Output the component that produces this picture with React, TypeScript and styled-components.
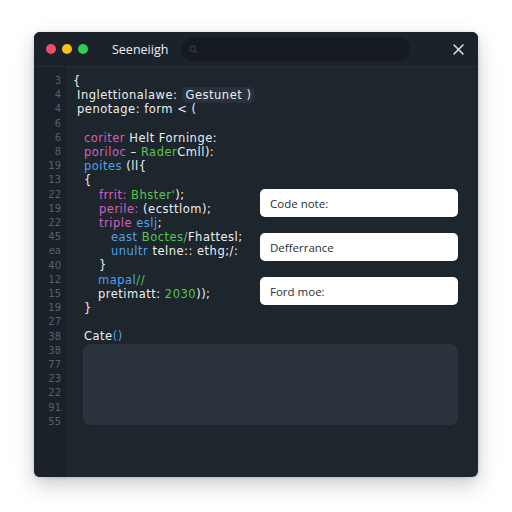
import React from 'react';
import styled, { createGlobalStyle } from 'styled-components';

const GlobalStyle = createGlobalStyle`
  html, body {
    margin: 0;
    padding: 0;
    background: #ffffff;
    font-family: "Open Sans", "Noto Sans", sans-serif;
  }
`;

const Page = styled.div`
  width: 512px;
  height: 512px;
  padding: 32px 34px 35px 34px;
  box-sizing: border-box;
  background: #ffffff;
`;

const Window = styled.div`
  width: 444px;
  height: 445px;
  display: flex;
  flex-direction: column;
  background: #1d252d;
  border-radius: 6px;
  overflow: hidden;
  box-shadow: 0 8px 22px rgba(0, 0, 0, 0.2), 0 1px 4px rgba(0, 0, 0, 0.15);
`;

const TitleBar = styled.header`
  height: 35px;
  flex-shrink: 0;
  display: flex;
  align-items: center;
  padding: 0 14px 0 12px;
  background: #1b2229;
  border-bottom: 1px solid #232b33;
  box-sizing: border-box;
`;

const Lights = styled.div`
  display: flex;
  gap: 6px;
`;

const Light = styled.span<{ $color: string }>`
  width: 10px;
  height: 10px;
  border-radius: 50%;
  background: ${(p) => p.$color};
`;

const Title = styled.span`
  margin-left: 24px;
  color: #eef1f4;
  font-size: 12.5px;
  font-weight: 500;
`;

const Search = styled.div`
  margin-left: 13px;
  width: 229px;
  height: 24px;
  border-radius: 12px;
  background: #151b21;
  display: flex;
  align-items: center;
  padding-left: 8px;
  box-sizing: border-box;
  color: #2c353e;
`;

const Close = styled.div`
  margin-left: auto;
  display: flex;
  color: #dfe3e7;
`;

const Body = styled.div`
  flex: 1;
  display: flex;
`;

const Gutter = styled.div`
  width: 34px;
  flex-shrink: 0;
  padding: 7px 6px 0 0;
  box-sizing: border-box;
  background: #1a2128;
  border-right: 1px solid #222a32;
  text-align: right;
  font-family: "DejaVu Sans", sans-serif;
  font-size: 10px;
  line-height: 14.2px;
  color: #56616c;
`;

const Editor = styled.div`
  flex: 1;
  padding: 7px 20px 0 5px;
  box-sizing: border-box;
`;

const Top = styled.div`
  display: grid;
  grid-template-columns: 1fr 198px;
`;

const Code = styled.div`
  font-family: "DejaVu Sans", sans-serif;
  font-size: 11.5px;
  letter-spacing: 0.5px;
  line-height: 14.2px;
  color: #eceff2;
  white-space: pre;
`;

const Line = styled.div<{ $indent: number }>`
  height: 14.2px;
  padding-left: ${(p) => p.$indent}px;
`;

const Tok = styled.span<{ $kind?: 'kw' | 'fn' | 'str' | 'mark' }>`
  color: ${(p) =>
    p.$kind === 'kw'
      ? '#d660bd'
      : p.$kind === 'fn'
      ? '#4ea3ea'
      : p.$kind === 'str'
      ? '#5cc453'
      : '#eceff2'};
  ${(p) =>
    p.$kind === 'mark' &&
    `background: #29323b; border-radius: 5px; padding: 1px 4px;`}
`;

const Notes = styled.div`
  display: flex;
  flex-direction: column;
  gap: 16px;
  padding-top: 115px;
`;

const Note = styled.div`
  height: 28px;
  display: flex;
  align-items: center;
  padding-left: 10px;
  background: #ffffff;
  border-radius: 5px;
  color: #2a2f35;
  font-size: 11.5px;
`;

const Panel = styled.div`
  margin: 0 0 0 10px;
  height: 81px;
  border-radius: 8px;
  background: #2b343d;
`;

const numbers = ['3', '4', '4', '6', '6', '8', '19', '13', '22', '19', '22', '45', 'ea', '40', '12', '15', '19', '27', '38', '38', '77', '23', '22', '91', '55'];

export default function App() {
  return (
    <>
      <GlobalStyle />
      <Page>
        <Window>
          <TitleBar>
            <Lights>
              <Light $color="#ee4d6a" />
              <Light $color="#f6c21d" />
              <Light $color="#2fcf55" />
            </Lights>
            <Title>Seeneiigh</Title>
            <Search>
              <svg width="9" height="9" viewBox="0 0 10 10" fill="none" stroke="currentColor" strokeWidth="1.6">
                <circle cx="4.2" cy="4.2" r="3" />
                <path d="M6.5 6.5 L9 9" />
              </svg>
            </Search>
            <Close>
              <svg width="11" height="11" viewBox="0 0 11 11" stroke="currentColor" strokeWidth="1.5" strokeLinecap="round">
                <path d="M1 1 L10 10 M10 1 L1 10" />
              </svg>
            </Close>
          </TitleBar>
          <Body>
            <Gutter>
              {numbers.map((n, i) => (
                <div key={i}>{n}</div>
              ))}
            </Gutter>
            <Editor>
              <Top>
                <Code>
                  <Line $indent={0}>{'{'}</Line>
                  <Line $indent={4}>
                    Inglettionalawe: <Tok $kind="mark">Gestunet )</Tok>
                  </Line>
                  <Line $indent={4}>penotage: form &lt; (</Line>
                  <Line $indent={0}> </Line>
                  <Line $indent={11}>
                    <Tok $kind="kw">coriter</Tok> Helt Forninge:
                  </Line>
                  <Line $indent={11}>
                    <Tok $kind="kw">poriloc</Tok> – <Tok $kind="str">Rader</Tok>Cmll):
                  </Line>
                  <Line $indent={11}>
                    <Tok $kind="fn">poites</Tok> (ll{'{'}
                  </Line>
                  <Line $indent={11}>{'{'}</Line>
                  <Line $indent={26}>
                    <Tok $kind="kw">frrit:</Tok> <Tok $kind="str">Bhster'</Tok>);
                  </Line>
                  <Line $indent={26}>
                    <Tok $kind="kw">perile:</Tok> (ecsttlom);
                  </Line>
                  <Line $indent={26}>
                    <Tok $kind="kw">triple</Tok> <Tok $kind="fn">eslj</Tok>;
                  </Line>
                  <Line $indent={38}>
                    <Tok $kind="fn">east</Tok> <Tok $kind="str">Boctes/</Tok>Fhattesl;
                  </Line>
                  <Line $indent={38}>
                    <Tok $kind="fn">unultr</Tok> telne:: ethg;/:
                  </Line>
                  <Line $indent={26}>{'}'}</Line>
                  <Line $indent={25}>
                    <Tok $kind="fn">mapal</Tok><Tok $kind="str">//</Tok>
                  </Line>
                  <Line $indent={25}>
                    pretimatt: <Tok $kind="str">2030</Tok>));
                  </Line>
                  <Line $indent={11}>{'}'}</Line>
                  <Line $indent={0}> </Line>
                  <Line $indent={11}>
                    Cate<Tok $kind="fn">()</Tok>
                  </Line>
                </Code>
                <Notes>
                  <Note>Code note:</Note>
                  <Note>Defferrance</Note>
                  <Note>Ford moe:</Note>
                </Notes>
              </Top>
              <Panel />
            </Editor>
          </Body>
        </Window>
      </Page>
    </>
  );
}
